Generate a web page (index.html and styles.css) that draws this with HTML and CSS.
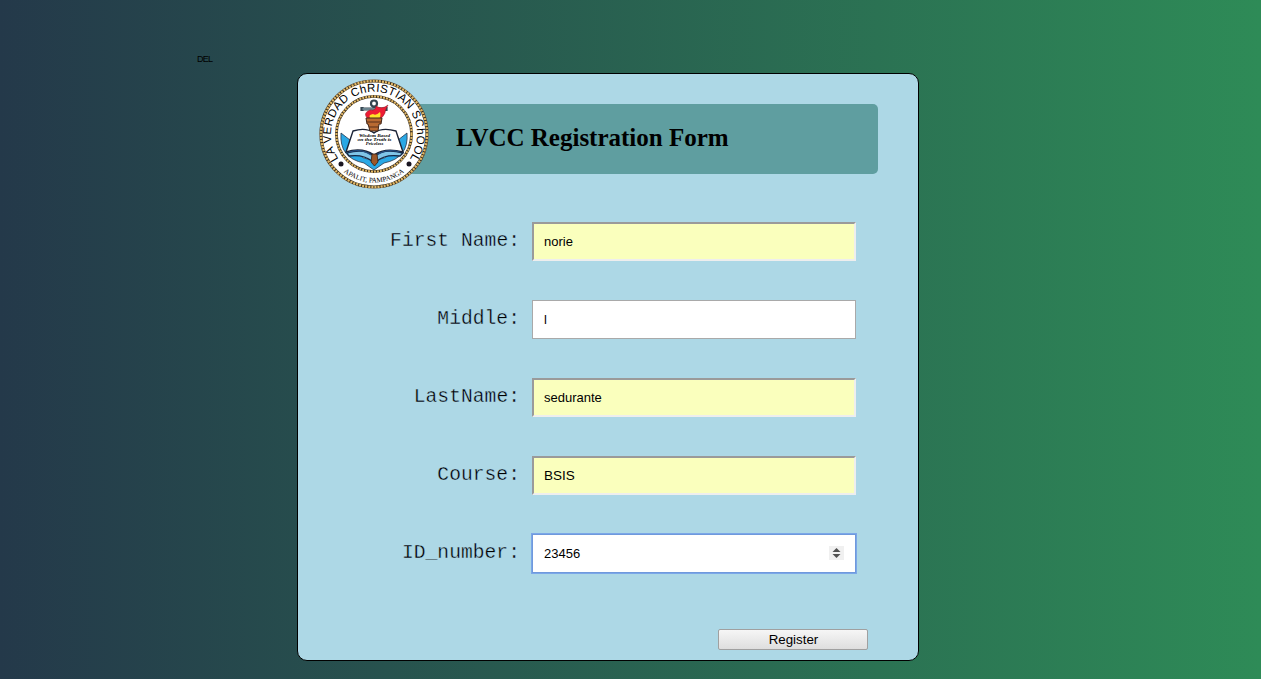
FILE: index.html
```html
<!DOCTYPE html>
<html lang="en">
<head>
<meta charset="utf-8">
<title>LVCC Registration Form</title>
<link rel="stylesheet" href="styles.css">
</head>
<body>
<div class="note">DEL</div>
<main class="card">
  <header class="header">
    <svg class="logo" viewBox="0 0 110 110">
      <defs>
        <path id="arc-top" d="M19.5 80 A43 43 0 1 1 90.5 80"/>
        <path id="arc-bottom" d="M12 78 A49 49 0 0 0 98 78"/>
      </defs>
      <circle cx="55" cy="55" r="54.5" fill="#fff"/>
      <circle cx="55" cy="55" r="53" fill="none" stroke="#382e1f" stroke-width="3.2"/>
      <circle cx="55" cy="55" r="53" fill="none" stroke="#e2b765" stroke-width="2.4" stroke-dasharray="2.1 1"/>
      <circle cx="55" cy="55" r="37.6" fill="none" stroke="#382e1f" stroke-width="2.8"/>
      <circle cx="55" cy="55" r="37.6" fill="none" stroke="#e2b765" stroke-width="2.1" stroke-dasharray="2 1"/>
      <text class="seal-name"><textPath href="#arc-top" textLength="186" lengthAdjust="spacing">LA VERDAD ChRISTIAN SChOOL</textPath></text>
      <text class="seal-place"><textPath href="#arc-bottom" startOffset="50%" text-anchor="middle">APALIT, PAMPANGA</textPath></text>
      <circle cx="22" cy="85" r="2.5" fill="#191521"/>
      <circle cx="90" cy="85" r="2.5" fill="#191521"/>
      <path d="M22 54 L31 61 Q31 77 55 82 Q79 77 79 61 L88 54 Q90 79 65 84 L55 91 L45 84 Q20 79 22 54Z" fill="#2aa8e5" stroke="#24364c" stroke-width=".8"/>
      <path d="M27 73 L34 52 Q47 48 55 54 Q63 48 77 52 L84 73 Q66 68 55 76 Q43 68 27 73Z" fill="#fff" stroke="#1b2437" stroke-width="1.4"/>
      <path d="M28 74 Q45 69 55 77 Q66 69 84 74 L81 77 Q66 75 58 82 L53 82 Q44 75 30 77Z" fill="#80c5e8" stroke="#142846" stroke-width="1.3"/>
      <path d="M30 73 Q43 69 52 76 M81 73 Q67 69 58 76" fill="none" stroke="#234c80" stroke-width="1.2"/>
      <path d="M53 75H58L59 83L55.5 87L52 83Z" fill="#9c5728" stroke="#322014" stroke-width=".8"/>
      <circle cx="55" cy="24.5" r="3" fill="none" stroke="#344550" stroke-width="2.2"/>
      <path d="M43 30H67M55 28V39M43 28V32M67 28V32" stroke="#344550" stroke-width="3.2"/>
      <path d="M43.5 30H66.5" stroke="#7e9aa5" stroke-width="1.5"/>
      <path d="M49 40 Q43 34 51 31 Q57 32 57 27 Q63 31 69 26 Q66 31 66 34 Q64 39 59 41Z" fill="#ed1c34" stroke="#8e1720" stroke-width=".5"/>
      <path d="M52 40 Q48 36 54 35 Q57 37 61 33 Q63 38 58 41Z" fill="#ffe229"/>
      <path d="M47 39H63L62 45H60L59 52H51L49 45H48Z" fill="#b96a32" stroke="#402619"/>
      <path d="M48 43H62M50 48H60" stroke="#592f1b" stroke-width="1.2"/>
      <g class="seal-motto"><text x="55.5" y="57.5" textLength="31" lengthAdjust="spacingAndGlyphs">Wisdom Based</text><text x="55.5" y="62" textLength="34" lengthAdjust="spacingAndGlyphs">on the Truth is</text><text x="55.5" y="66.3">Priceless</text></g>
    </svg>
    <h1 class="title">LVCC Registration Form</h1>
  </header>
  <form class="form">
    <div class="row"><label class="label" for="first">First Name:</label><input class="field filled" id="first" value="norie"></div>
    <div class="row"><label class="label" for="middle">Middle:</label><input class="field" id="middle" value="l"></div>
    <div class="row"><label class="label" for="last">LastName:</label><input class="field filled" id="last" value="sedurante"></div>
    <div class="row"><label class="label" for="course">Course:</label><input class="field filled caps" id="course" value="BSIS"></div>
    <div class="row"><label class="label" for="number">ID_number:</label>
      <div class="field active"><input class="number" id="number" value="23456"><svg class="spinner" viewBox="0 0 15 14"><rect width="15" height="14" fill="#f0f0f0"/><path d="M3.5 6L7.5 2L11.5 6ZM3.5 8H11.5L7.5 12Z" fill="#505050"/></svg></div>
    </div>
    <button class="submit" type="button">Register</button>
  </form>
</main>
</body>
</html>
```
FILE: styles.css
```css
* { box-sizing: border-box; }
body {
  margin: 0;
  height: 679px;
  overflow: hidden;
  padding: 53px 0 0 197px;
  background: linear-gradient(to right, #24394a, #2e8b57);
  font-family: "Liberation Sans", Arial, sans-serif;
  color: #000;
}
.note { height: 20px; font-size: 9px; line-height: 12px; letter-spacing: -.8px; }
.card {
  width: 622px;
  height: 588px;
  margin-left: 100px;
  border: 1px solid #000;
  border-radius: 10px;
  background: #add8e6;
}
.header {
  position: relative;
  width: 500px;
  height: 70px;
  margin: 30px 0 0 80px;
  border-radius: 5px;
  background: #5f9ea0;
}
.logo { position: absolute; left: -59px; top: -25px; width: 110px; height: 110px; }
.title {
  margin: 0;
  padding-left: 78px;
  font: bold 25px/68px "Liberation Serif", "Times New Roman", serif;
}
.seal-name { font: 11.5px "Liberation Sans", sans-serif; }
.seal-place { font: 7px "Liberation Serif", serif; }
.seal-motto { font: italic bold 4.8px "Liberation Serif", serif; text-anchor: middle; }
.form { display: flex; flex-direction: column; gap: 39px; padding-top: 48px; }
.row { display: flex; height: 39px; }
.label {
  width: 234px;
  padding-right: 12px;
  text-align: right;
  font: 19.6px/38px "Liberation Mono", "Courier New", monospace;
  letter-spacing: .05px;
  -webkit-text-stroke: .35px #add8e6;
}
.field {
  width: 324px;
  height: 39px;
  padding: 0 11px;
  border: 1px solid #a9a9a9;
  border-radius: 0;
  outline: none;
  background: #fff;
  color: #000;
  font: 13px "Liberation Sans", Arial, sans-serif;
}
.filled {
  padding: 0 10px;
  border: 2px solid;
  border-color: #9a9a9a #eee #eee #9a9a9a;
  background: #faffbd;
}
.caps { font-size: 13.5px; }
.active {
  display: flex;
  align-items: center;
  border-color: #6f99dc;
  box-shadow: 0 0 0 1px #7ba7e8;
}
.number { flex: 1; min-width: 0; padding: 0; border: 0; outline: 0; background: none; font: inherit; }
.spinner { width: 15px; height: 14px; margin-bottom: 2px; }
.submit {
  width: 150px;
  height: 21px;
  margin: 17px 0 0 420px;
  padding: 0 0 0 1px;
  border: 1px solid #a0a0a0;
  border-radius: 2px;
  background: linear-gradient(#f6f6f6, #dedede);
  color: #000;
  font: 13.333px "Liberation Sans", Arial, sans-serif;
}
```
